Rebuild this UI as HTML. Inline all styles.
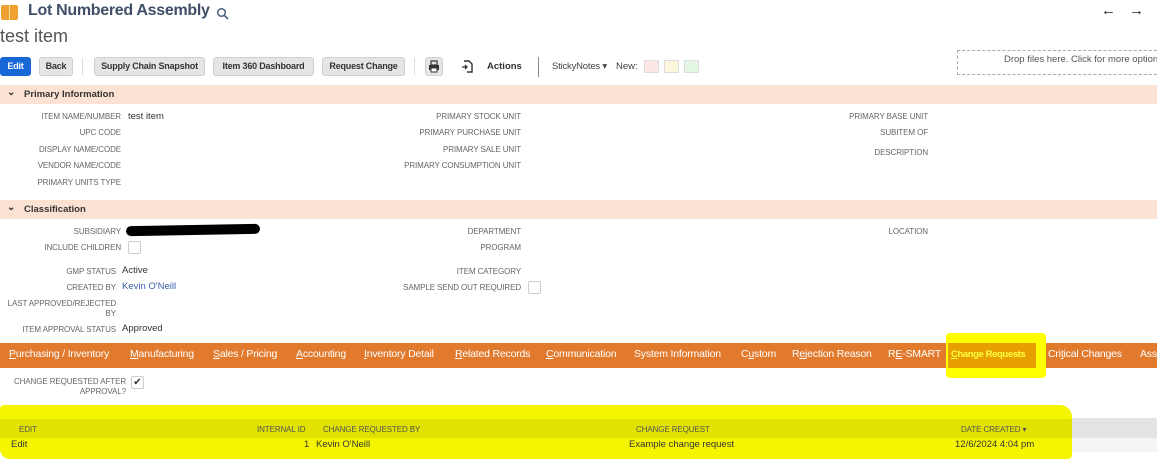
<!DOCTYPE html>
<html><head><style>
*{margin:0;padding:0;box-sizing:border-box}
body{width:1157px;height:472px;position:relative;overflow:hidden;background:#fff;font-family:"Liberation Sans",sans-serif;color:#333}
.a{position:absolute;white-space:nowrap}
.btn{position:absolute;top:57px;height:19px;background:#e5e5e5;border:1px solid #d0d0d0;border-radius:3px;font-size:9px;letter-spacing:-0.2px;font-weight:bold;color:#333;text-align:center;line-height:17px;white-space:nowrap;overflow:hidden}
.band{position:absolute;left:0;width:1157px;height:19px;background:#fbe2d3;font-size:9.5px;font-weight:bold;color:#333;line-height:19px;padding-left:24px}
.lbl{position:absolute;font-size:8px;color:#666;text-align:right;white-space:nowrap;letter-spacing:-0.1px}
.val{position:absolute;font-size:9.5px;color:#333;white-space:nowrap}
.tab{position:absolute;top:348px;font-size:10.5px;letter-spacing:-0.2px;color:#fff;white-space:nowrap}
.tab u{text-decoration:underline}
.cb{position:absolute;width:13px;height:13px;border:1px solid #ccc;border-radius:2px;background:#fff}
</style></head><body>
<div class="a" style="left:1px;top:5px;width:17px;height:15px;background:#f0a030;border-radius:2px"></div>
<div class="a" style="left:9px;top:5px;width:1px;height:15px;background:#fde2a0"></div>
<div class="a" style="left:28px;top:2px;font-size:16px;letter-spacing:-0.3px;font-weight:bold;color:#3f4f68">Lot Numbered Assembly</div>
<svg class="a" style="left:216px;top:7px" width="13" height="13"><circle cx="5.5" cy="5.5" r="3.8" fill="none" stroke="#4d6080" stroke-width="1.5"/><line x1="8.3" y1="8.3" x2="12" y2="12" stroke="#4d6080" stroke-width="1.6"/></svg>
<div class="a" style="left:1101px;top:2px;font-size:15px;color:#222">&#8592;</div>
<div class="a" style="left:1129px;top:2px;font-size:15px;color:#222">&#8594;</div>
<div class="a" style="left:0;top:26px;font-size:18px;color:#555">test item</div>

<div class="btn" style="left:0;width:31px;background:#1767d6;border-color:#1767d6;color:#fff">Edit</div>
<div class="btn" style="left:39px;width:34px">Back</div>
<div class="a" style="left:82px;top:58px;width:1px;height:17px;background:#ddd"></div>
<div class="btn" style="left:94px;width:111px">Supply Chain Snapshot</div>
<div class="btn" style="left:213px;width:101px">Item 360 Dashboard</div>
<div class="btn" style="left:322px;width:83px">Request Change</div>
<div class="a" style="left:414px;top:58px;width:1px;height:17px;background:#ddd"></div>
<div class="btn" style="left:425px;width:18px"></div>
<svg class="a" style="left:428px;top:60px" width="12" height="13"><rect x="3" y="1" width="6" height="4" fill="none" stroke="#333" stroke-width="1.2"/><rect x="1" y="5" width="10" height="5" fill="#333"/><rect x="3" y="8" width="6" height="4" fill="#fff" stroke="#333" stroke-width="1"/></svg>
<svg class="a" style="left:460px;top:58px" width="14" height="16"><path d="M4 3 H9 L12 6 V14 H7" fill="none" stroke="#333" stroke-width="1.4"/><path d="M2 9 H7 M5 7 L7 9 L5 11" fill="none" stroke="#333" stroke-width="1.3"/></svg>
<div class="a" style="left:487px;top:61px;font-size:9.5px;font-weight:bold">Actions</div>
<div class="a" style="left:538px;top:57px;width:1px;height:20px;background:#888"></div>
<div class="a" style="left:552px;top:61px;font-size:9.5px;letter-spacing:-0.2px;color:#444">StickyNotes &#9662;</div>
<div class="a" style="left:616px;top:61px;font-size:9.5px;color:#444">New:</div>
<div class="a" style="left:644px;top:60px;width:15px;height:13px;border:1px solid #ddd;background:#fde6e6"></div>
<div class="a" style="left:664px;top:60px;width:15px;height:13px;border:1px solid #ddd;background:#fbf7dc"></div>
<div class="a" style="left:684px;top:60px;width:15px;height:13px;border:1px solid #ddd;background:#e3f6e1"></div>
<div class="a" style="left:957px;top:50px;width:210px;height:25px;border:1px dashed #aaa;font-size:9.5px;color:#555;padding:3px 0 0 46px">Drop files here. Click for more options</div>

<div class="band" style="top:85px">Primary Information</div>
<div class="a" style="left:7px;top:87px;font-size:10px;font-weight:bold">&#8964;</div>

<div class="lbl" style="right:1036px;top:112px">ITEM NAME/NUMBER</div><div class="val" style="left:128px;top:111px">test item</div>
<div class="lbl" style="right:1036px;top:128px">UPC CODE</div>
<div class="lbl" style="right:1036px;top:145px">DISPLAY NAME/CODE</div>
<div class="lbl" style="right:1036px;top:161px">VENDOR NAME/CODE</div>
<div class="lbl" style="right:1036px;top:178px">PRIMARY UNITS TYPE</div>
<div class="lbl" style="right:636px;top:112px">PRIMARY STOCK UNIT</div>
<div class="lbl" style="right:636px;top:128px">PRIMARY PURCHASE UNIT</div>
<div class="lbl" style="right:636px;top:145px">PRIMARY SALE UNIT</div>
<div class="lbl" style="right:636px;top:161px">PRIMARY CONSUMPTION UNIT</div>
<div class="lbl" style="right:229px;top:112px">PRIMARY BASE UNIT</div>
<div class="lbl" style="right:229px;top:128px">SUBITEM OF</div>
<div class="lbl" style="right:229px;top:148px">DESCRIPTION</div>

<div class="band" style="top:200px">Classification</div>
<div class="a" style="left:7px;top:202px;font-size:10px;font-weight:bold">&#8964;</div>

<div class="lbl" style="right:1036px;top:227px">SUBSIDIARY</div>
<div class="a" style="left:126px;top:225px;width:134px;height:10px;background:#000;border-radius:6px;transform:rotate(-1deg)"></div>
<div class="lbl" style="right:1036px;top:243px">INCLUDE CHILDREN</div><div class="cb" style="left:128px;top:241px"></div>
<div class="lbl" style="right:1041px;top:267px">GMP STATUS</div><div class="val" style="left:122px;top:265px">Active</div>
<div class="lbl" style="right:1041px;top:283px">CREATED BY</div><div class="val" style="left:122px;top:281px;color:#3a5fa8">Kevin O'Neill</div>
<div class="lbl" style="right:1041px;top:299px;line-height:10px">LAST APPROVED/REJECTED<br>BY</div>
<div class="lbl" style="right:1041px;top:325px">ITEM APPROVAL STATUS</div><div class="val" style="left:122px;top:323px">Approved</div>
<div class="lbl" style="right:636px;top:227px">DEPARTMENT</div>
<div class="lbl" style="right:636px;top:243px">PROGRAM</div>
<div class="lbl" style="right:636px;top:267px">ITEM CATEGORY</div>
<div class="lbl" style="right:636px;top:283px">SAMPLE SEND OUT REQUIRED</div><div class="cb" style="left:528px;top:281px"></div>
<div class="lbl" style="right:229px;top:227px">LOCATION</div>

<div class="a" style="left:0;top:343px;width:1157px;height:25px;background:#e27a2e"></div>
<div class="a" style="left:946px;top:333px;width:100px;height:45px;background:#ffff00;border-radius:4px"></div>
<div class="a" style="left:948px;top:343px;width:88px;height:25px;background:#e8a000"></div>
<div class="tab" style="left:9px"><u>P</u>urchasing / Inventory</div>
<div class="tab" style="left:130px"><u>M</u>anufacturing</div>
<div class="tab" style="left:213px"><u>S</u>ales / Pricing</div>
<div class="tab" style="left:296px"><u>A</u>ccounting</div>
<div class="tab" style="left:364px"><u>I</u>nventory Detail</div>
<div class="tab" style="left:455px"><u>R</u>elated Records</div>
<div class="tab" style="left:546px"><u>C</u>ommunication</div>
<div class="tab" style="left:634px">System Information</div>
<div class="tab" style="left:741px">C<u>u</u>stom</div>
<div class="tab" style="left:792px">R<u>e</u>jection Reason</div>
<div class="tab" style="left:888px">R<u>E</u>-SMART</div>
<div class="tab" style="left:951px;color:#ffff40;font-weight:bold;font-size:9.5px;letter-spacing:-0.4px;top:349px"><u>C</u>hange Requests</div>
<div class="tab" style="left:1048px">Cri<u>t</u>ical Changes</div>
<div class="tab" style="left:1140px">Assi</div>

<div class="lbl" style="right:1031px;top:377px;line-height:10px">CHANGE REQUESTED AFTER<br>APPROVAL?</div>
<div class="cb" style="left:131px;top:376px;font-size:10px;line-height:11px;text-align:center;color:#333">&#10004;</div>

<div class="a" style="left:0;top:418px;width:1157px;height:20px;background:#e3e3e3"></div>
<div class="a" style="left:0;top:438px;width:1157px;height:14px;background:#f5f5f5"></div>
<div class="a" style="left:0;top:405px;width:1072px;height:54px;background:#f5f500;border-radius:4px 12px 4px 10px"></div>
<div class="a" style="left:0;top:419px;width:1072px;height:19px;background:#e2e200"></div>
<div class="lbl" style="left:19px;top:425px;color:#555">EDIT</div>
<div class="lbl" style="left:257px;top:425px;color:#555">INTERNAL ID</div>
<div class="lbl" style="left:323px;top:425px;color:#555">CHANGE REQUESTED BY</div>
<div class="lbl" style="left:636px;top:425px;color:#555">CHANGE REQUEST</div>
<div class="lbl" style="left:961px;top:425px;color:#555">DATE CREATED &#9662;</div>
<div class="val" style="left:11px;top:439px">Edit</div>
<div class="val" style="left:304px;top:439px">1</div>
<div class="val" style="left:316px;top:439px">Kevin O'Neill</div>
<div class="val" style="left:629px;top:439px">Example change request</div>
<div class="val" style="left:955px;top:439px">12/6/2024 4:04 pm</div>
</body></html>
